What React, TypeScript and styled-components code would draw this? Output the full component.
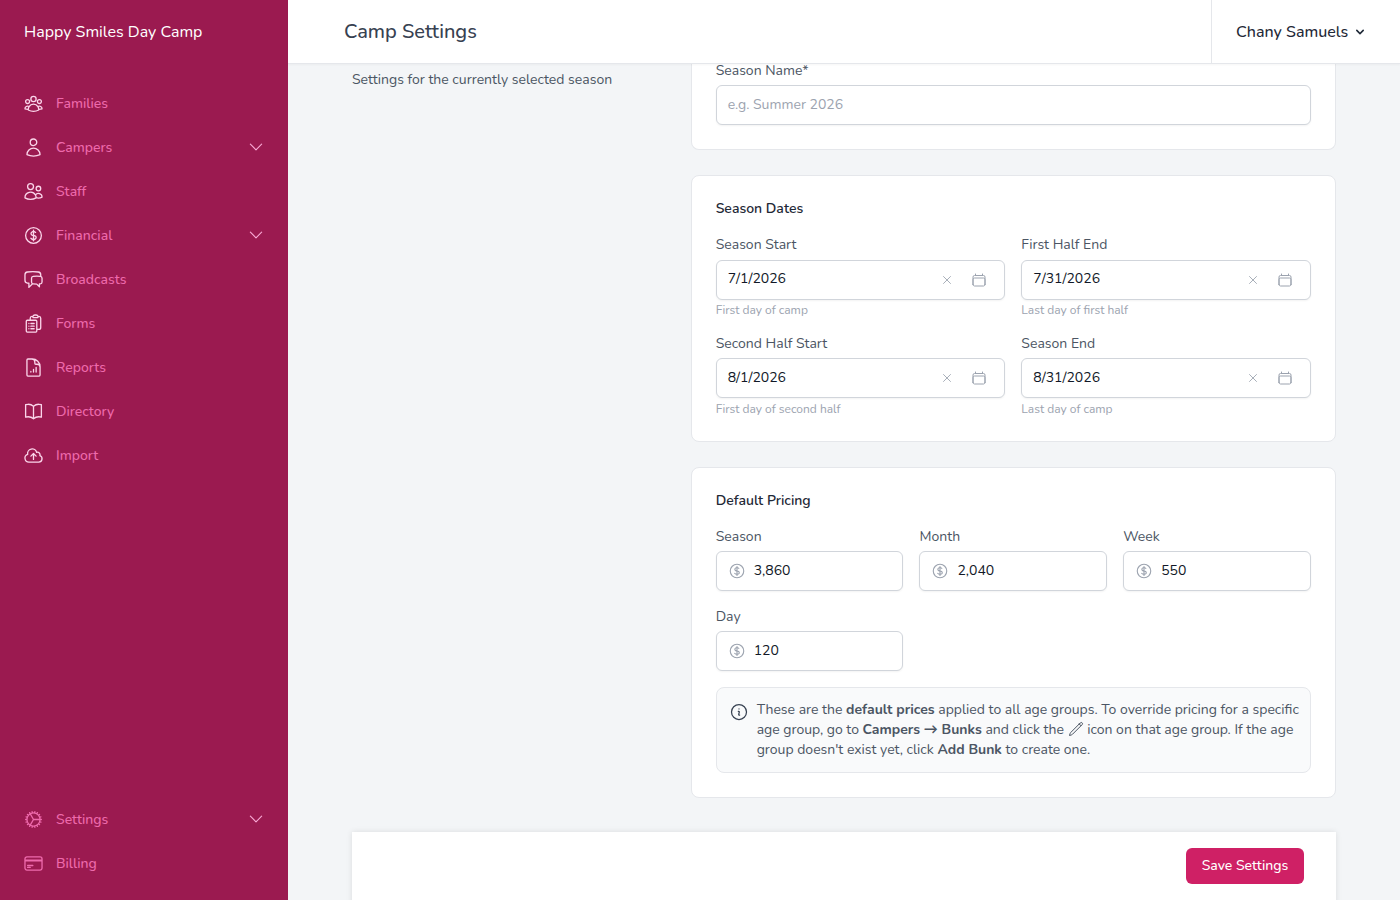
import { createGlobalStyle } from 'styled-components'
import styled from 'styled-components'
import type { ComponentType, ReactNode } from 'react'
import {
  HiOutlineBookOpen,
  HiOutlineCalendar,
  HiOutlineChatBubbleLeftRight,
  HiOutlineChevronDown,
  HiOutlineClipboardDocumentList,
  HiOutlineCloudArrowUp,
  HiOutlineCog,
  HiOutlineCreditCard,
  HiOutlineCurrencyDollar,
  HiOutlineDocumentChartBar,
  HiOutlineInformationCircle,
  HiOutlinePencil,
  HiOutlineUser,
  HiOutlineUserGroup,
  HiOutlineUsers,
  HiOutlineXMark
} from 'react-icons/hi2'
import { HiChevronDown } from 'react-icons/hi'

const FONT = `'Nunito', 'Lato', 'Noto Sans', sans-serif`

const GlobalStyle = createGlobalStyle`
  html, body {
    margin: 0;
    height: 100%;
    overflow: hidden;
    font-family: ${FONT};
    background: #f3f5f7;
  }
  * {
    box-sizing: border-box;
  }
`

type NavEntry = {
  hasChildren?: boolean
  Icon: ComponentType<{ size?: number }>
  isMuted?: boolean
  label: string
}

const NAV_TOP: NavEntry[] = [
  { Icon: HiOutlineUserGroup, label: 'Families' },
  { hasChildren: true, Icon: HiOutlineUser, label: 'Campers' },
  { Icon: HiOutlineUsers, label: 'Staff' },
  { hasChildren: true, Icon: HiOutlineCurrencyDollar, label: 'Financial' },
  { Icon: HiOutlineChatBubbleLeftRight, label: 'Broadcasts' },
  { Icon: HiOutlineClipboardDocumentList, label: 'Forms' },
  { Icon: HiOutlineDocumentChartBar, label: 'Reports' },
  { Icon: HiOutlineBookOpen, label: 'Directory' },
  { Icon: HiOutlineCloudArrowUp, label: 'Import' }
]

const NAV_BOTTOM: NavEntry[] = [
  { hasChildren: true, Icon: HiOutlineCog, isMuted: true, label: 'Settings' },
  { Icon: HiOutlineCreditCard, isMuted: true, label: 'Billing' }
]

function NavItem({ hasChildren, Icon, isMuted = false, label }: NavEntry) {
  return (
    <NavRow>
      <NavIcon $isMuted={isMuted}>
        <Icon size={21} />
      </NavIcon>
      <NavLabel>{label}</NavLabel>
      {hasChildren && (
        <NavChevron>
          <HiOutlineChevronDown size={18} />
        </NavChevron>
      )}
    </NavRow>
  )
}

function DateField({ hint, label, value }: { hint: string; label: string; value: string }) {
  return (
    <div>
      <Label>{label}</Label>
      <InputBox>
        <InputValue>{value}</InputValue>
        <ClearIcon>
          <HiOutlineXMark size={14} />
        </ClearIcon>
        <CalendarIcon>
          <HiOutlineCalendar size={16} />
        </CalendarIcon>
      </InputBox>
      <Hint>{hint}</Hint>
    </div>
  )
}

function PriceField({ label, value }: { label: string; value: string }) {
  return (
    <div>
      <Label>{label}</Label>
      <InputBox>
        <DollarIcon>
          <HiOutlineCurrencyDollar size={18} />
        </DollarIcon>
        <PriceValue>{value}</PriceValue>
      </InputBox>
    </div>
  )
}

function Card({ children, title }: { children: ReactNode; title?: string }) {
  return (
    <CardBox>
      {title && <CardTitle>{title}</CardTitle>}
      {children}
    </CardBox>
  )
}

export default function App() {
  return (
    <Shell>
      <GlobalStyle />
      <Sidebar>
        <Brand>Happy Smiles Day Camp</Brand>
        <NavList>
          {NAV_TOP.map(entry => (
            <NavItem key={entry.label} {...entry} />
          ))}
        </NavList>
        <NavFooter>
          {NAV_BOTTOM.map(entry => (
            <NavItem key={entry.label} {...entry} />
          ))}
        </NavFooter>
      </Sidebar>
      <Column>
        <Header>
          <PageTitle>Camp Settings</PageTitle>
          <UserMenu>
            Chany Samuels
            <HiChevronDown size={16} />
          </UserMenu>
        </Header>
        <Main>
          <Section>
            <SectionText>Settings for the currently selected season</SectionText>
            <Cards>
              <Card>
                <Label>Season Name*</Label>
                <InputBox>
                  <Placeholder>e.g. Summer 2026</Placeholder>
                </InputBox>
              </Card>
              <Card title="Season Dates">
                <FieldGrid $columns={2}>
                  <DateField hint="First day of camp" label="Season Start" value="7/1/2026" />
                  <DateField hint="Last day of first half" label="First Half End" value="7/31/2026" />
                  <DateField hint="First day of second half" label="Second Half Start" value="8/1/2026" />
                  <DateField hint="Last day of camp" label="Season End" value="8/31/2026" />
                </FieldGrid>
              </Card>
              <Card title="Default Pricing">
                <FieldGrid $columns={3}>
                  <PriceField label="Season" value="3,860" />
                  <PriceField label="Month" value="2,040" />
                  <PriceField label="Week" value="550" />
                  <PriceField label="Day" value="120" />
                </FieldGrid>
                <Notice>
                  <NoticeIcon>
                    <HiOutlineInformationCircle size={20} />
                  </NoticeIcon>
                  <NoticeText>
                    These are the <b>default prices</b> applied to all age groups. To override pricing for a specific
                    <br />
                    age group, go to <b>Campers → Bunks</b> and click the{' '}
                    <PencilIcon>
                      <HiOutlinePencil size={16} />
                    </PencilIcon>{' '}
                    icon on that age group. If the age
                    <br />
                    group doesn't exist yet, click <b>Add Bunk</b> to create one.
                  </NoticeText>
                </Notice>
              </Card>
            </Cards>
          </Section>
          <SaveBar>
            <SaveButton>Save Settings</SaveButton>
          </SaveBar>
        </Main>
      </Column>
    </Shell>
  )
}

const Shell = styled.div`
  display: flex;
  width: 1400px;
  height: 900px;
  overflow: hidden;
`

const Sidebar = styled.aside`
  display: flex;
  flex-direction: column;
  flex: 0 0 288px;
  background: #9b1a50;
  padding: 0 24px 17px;
`

const Brand = styled.div`
  height: 64px;
  line-height: 65px;
  color: #fff;
  font-size: 16px;
  font-weight: 400;
`

const NavList = styled.nav`
  display: flex;
  flex-direction: column;
  gap: 4px;
  margin-top: 19px;
`

const NavFooter = styled(NavList)`
  margin-top: auto;
`

const NavRow = styled.div`
  display: flex;
  align-items: center;
  height: 40px;
`

const NavIcon = styled.span<{ $isMuted: boolean }>`
  display: flex;
  width: 32px;
  color: ${p => (p.$isMuted ? '#ee6aac' : '#fbd5ea')};

  svg {
    margin-left: -1px;
  }
`

const NavLabel = styled.span`
  flex: 1;
  color: #ee6aac;
  font-size: 14px;
  font-weight: 500;
`

const NavChevron = styled.span`
  display: flex;
  margin-right: -1px;
  color: #f9a8d4;
`

const Column = styled.div`
  display: flex;
  flex-direction: column;
  flex: 1;
  min-width: 0;
`

const Header = styled.header`
  display: flex;
  align-items: stretch;
  justify-content: space-between;
  flex: 0 0 64px;
  background: #fff;
  border-bottom: 1px solid #e5e7eb;
  box-shadow: 0 1px 2px rgba(0, 0, 0, 0.04);
  padding-left: 56px;
  position: relative;
  z-index: 1;
`

const PageTitle = styled.h1`
  margin: 0;
  align-self: center;
  color: #374151;
  font-size: 20px;
  font-weight: 500;
`

const UserMenu = styled.div`
  display: flex;
  align-items: center;
  gap: 4px;
  width: 189px;
  padding-left: 24px;
  border-left: 1px solid #e5e7eb;
  color: #1f2937;
  font-size: 16px;
  font-weight: 500;
`

const Main = styled.main`
  flex: 1;
  min-height: 0;
  overflow: hidden;
  padding: 0 64px;
`

const Section = styled.div`
  display: grid;
  grid-template-columns: repeat(3, 1fr);
  column-gap: 32px;
  margin-top: -3.5px;
`

const SectionText = styled.p`
  margin: 9.5px 0 0;
  color: #4b5563;
  font-size: 14px;
  line-height: 20px;
`

const Cards = styled.div`
  display: flex;
  flex-direction: column;
  grid-column: span 2;
  gap: 25px;
`

const CardBox = styled.section`
  background: #fff;
  border: 1px solid #e5e7eb;
  border-radius: 8px;
  padding: 24px;

  &:first-child {
    border-top: 0;
    border-radius: 0 0 8px 8px;
    padding-top: 0;
  }
`

const CardTitle = styled.h3`
  margin: 1px 0 18.2px;
  color: #1f2937;
  font-size: 14px;
  font-weight: 600;
  line-height: 16px;
`

const FieldGrid = styled.div<{ $columns: number }>`
  display: grid;
  grid-template-columns: repeat(${p => p.$columns}, 1fr);
  gap: 15.5px 16px;
`

const Label = styled.label`
  display: block;
  margin-bottom: 4.5px;
  color: #4b5563;
  font-size: 14px;
  line-height: 20px;
`

const InputBox = styled.div`
  display: flex;
  align-items: center;
  height: 40px;
  padding: 0 12px 0 11px;
  background: #fff;
  border: 1px solid #d1d5db;
  border-radius: 6px;
  box-shadow: 0 1px 2px rgba(0, 0, 0, 0.05);
`

const InputValue = styled.span`
  flex: 1;
  padding-bottom: 2px;
  color: #111827;
  font-size: 14px;
`

const PriceValue = styled(InputValue)`
  padding-bottom: 1px;
`

const Placeholder = styled(InputValue)`
  color: #9ca3af;
`

const ClearIcon = styled.span`
  display: flex;
  margin-right: 17px;
  color: #9ca3af;
`

const CalendarIcon = styled.span`
  display: flex;
  margin-right: 5px;
  color: #9ca3af;
`

const DollarIcon = styled.span`
  display: flex;
  margin-right: 8px;
  color: #9ca3af;
`

const Hint = styled.div`
  margin-top: 2.5px;
  color: #9ca3af;
  font-size: 12px;
  line-height: 16px;
`

const Notice = styled.div`
  display: flex;
  gap: 8px;
  margin-top: 16px;
  padding: 12px;
  background: #f9fafb;
  border: 1px solid #e5e7eb;
  border-radius: 8px;
`

const NoticeIcon = styled.span`
  display: flex;
  flex: 0 0 20px;
  height: 20px;
  margin-top: 2px;
  color: #374151;
`

const NoticeText = styled.div`
  color: #4b5563;
  font-size: 14px;
  line-height: 20px;
  white-space: nowrap;

  b {
    font-weight: 700;
  }
`

const PencilIcon = styled.span`
  display: inline-flex;
  vertical-align: -3px;
`

const SaveBar = styled.div`
  display: flex;
  justify-content: flex-end;
  height: 120px;
  margin-top: 34px;
  padding: 16px 32px;
  background: #fff;
  box-shadow: 0 0 6px rgba(0, 0, 0, 0.1);
`

const SaveButton = styled.button`
  width: 118px;
  height: 36px;
  padding: 0 0 2px;
  background: #cf2065;
  border: 0;
  border-radius: 6px;
  color: #fff;
  font-family: inherit;
  font-size: 14px;
  font-weight: 500;
`
